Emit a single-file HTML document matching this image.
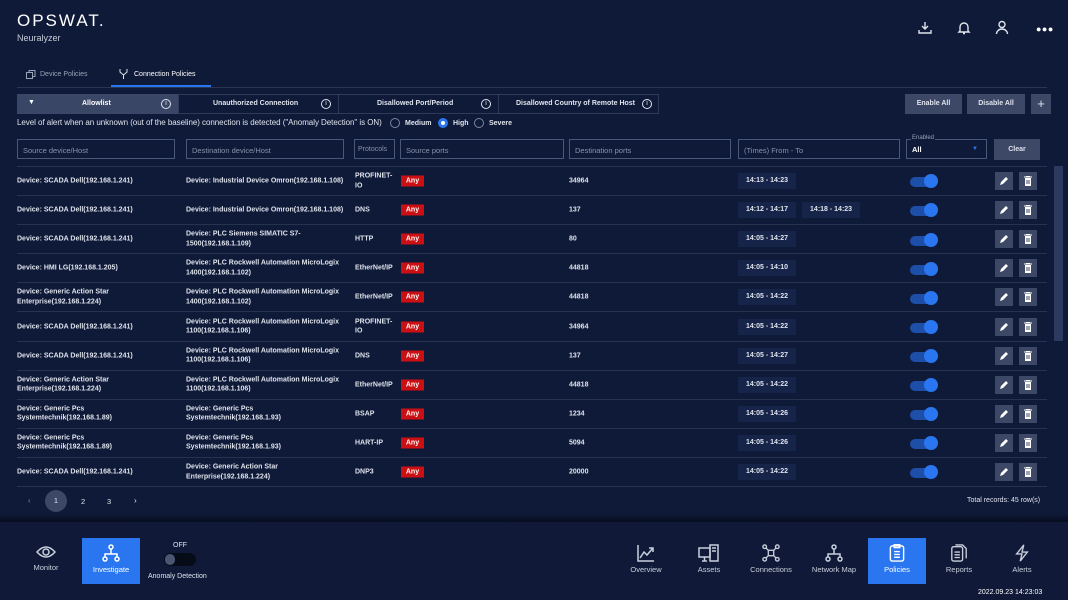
<!DOCTYPE html>
<html><head><meta charset="utf-8"><style>
*{box-sizing:border-box;margin:0;padding:0}
body{width:1068px;height:600px;background:#0f1a38;color:#dfe3ec;font-family:"Liberation Sans",sans-serif;overflow:hidden;position:relative}
.a{position:absolute}
.b{font-weight:bold}
.f8{font-size:8px}
.f7{font-size:7px}
.inp{position:absolute;top:139px;height:20px;border:1px solid #4a5878;color:#8792aa;font-size:7.5px;padding:6px 5px}
.row{position:absolute;left:17px;width:1030px;height:29px;border-bottom:1px solid #27324f;font-size:7px;font-weight:bold;color:#dfe3ec}
.row>div{position:absolute;top:50%;transform:translateY(-50%);line-height:9.5px}
.any{background:#cc0f12;color:#fff;width:23px;height:11px;line-height:11px!important;text-align:center;font-size:7px}
.chip{background:#16244a;padding:0 8px;height:16px;line-height:16px!important;display:inline-block}
.tg{width:26px;height:10px;border-radius:5px;background:#1d4ea8}
.tg:after{content:"";position:absolute;right:-2px;top:-3px;width:14px;height:14px;border-radius:50%;background:#2a76f0}
.btn{width:18px;height:18px;background:#3c4866;display:flex;align-items:center;justify-content:center}
.nav{position:absolute;top:538px;width:58px;height:46px;text-align:center;font-size:7.5px;color:#c9cfdc}
.nav svg{display:block;margin:6px auto 3px}
.ic{position:absolute;width:10px;height:10px;border:1px solid #dfe3ec;border-radius:50%;font-size:7px;text-align:center;line-height:8px}
</style></head><body>
<div class="a" style="left:17px;top:11px;font-size:17px;letter-spacing:2px;color:#fff">OPSWAT.</div>
<div class="a" style="left:17px;top:33px;font-size:9px;color:#c8cdd8">Neuralyzer</div>
<svg class="a" style="left:918px;top:21px" width="14" height="14" viewBox="0 0 14 14" fill="none" stroke="#dfe3ec" stroke-width="1.4"><path d="M7 1v7M4 5l3 3 3-3M1 9v3h12V9"/></svg>
<svg class="a" style="left:957px;top:21px" width="14" height="14" viewBox="0 0 14 14" fill="none" stroke="#dfe3ec" stroke-width="1.4"><path d="M3 10V6a4 4 0 018 0v4l1 1H2zM6 12.5h2"/></svg>
<svg class="a" style="left:995px;top:20px" width="14" height="15" viewBox="0 0 14 15" fill="none" stroke="#dfe3ec" stroke-width="1.4"><circle cx="7" cy="4.5" r="3"/><path d="M1.5 14a5.5 5 0 0111 0"/></svg>
<div class="a" style="left:1036px;top:24px;font-size:9px;letter-spacing:0.5px;color:#fff">●●●</div>

<div class="a" style="left:17px;top:87px;width:1030px;height:1px;background:#2a3552"></div>
<div class="a" style="left:111px;top:85px;width:100px;height:2px;background:#2a76f0"></div>
<svg class="a" style="left:26px;top:70px" width="10" height="9" viewBox="0 0 10 9" fill="none" stroke="#9aa3b8"><rect x="0.5" y="2.5" width="6" height="6"/><path d="M3 2.5V0.5h6v6H6.5"/></svg>
<div class="a f7" style="left:40px;top:71px;color:#9aa3b8">Device Policies</div>
<svg class="a" style="left:119px;top:69px" width="9" height="10" viewBox="0 0 9 10" fill="none" stroke="#dfe3ec"><path d="M1 0v3l3.5 3L8 3V0M4.5 6v4"/></svg>
<div class="a f7" style="left:134px;top:71px;color:#fff">Connection Policies</div>

<div class="a" style="left:17px;top:94px;width:161px;height:20px;background:#3a4665"></div>
<div class="a" style="left:28px;top:99px;font-size:7px;color:#fff">▼</div>
<div class="a f7 b" style="left:82px;top:100px;color:#fff">Allowlist</div>
<div class="a" style="left:178px;top:94px;width:481px;height:20px;border:1px solid #2e3a58"></div>
<div class="a" style="left:338px;top:94px;width:1px;height:20px;background:#2e3a58"></div>
<div class="a" style="left:498px;top:94px;width:1px;height:20px;background:#2e3a58"></div>
<div class="a f7 b" style="left:213px;top:100px">Unauthorized Connection</div>
<div class="a f7 b" style="left:377px;top:100px">Disallowed Port/Period</div>
<div class="a f7 b" style="left:516px;top:100px">Disallowed Country of Remote Host</div>
<div class="ic" style="left:161px;top:99px">i</div>
<div class="ic" style="left:321px;top:99px">i</div>
<div class="ic" style="left:481px;top:99px">i</div>
<div class="ic" style="left:642px;top:99px">i</div>

<div class="a f7 b" style="left:905px;top:94px;width:57px;height:20px;background:#3c4866;text-align:center;line-height:20px">Enable All</div>
<div class="a f7 b" style="left:967px;top:94px;width:58px;height:20px;background:#3c4866;text-align:center;line-height:20px">Disable All</div>
<div class="a" style="left:1031px;top:94px;width:20px;height:20px;background:#3c4866;text-align:center;line-height:19px;font-size:13px">+</div>

<div class="a" style="left:17px;top:118px;font-size:8px;letter-spacing:-0.05px">Level of alert when an unknown (out of the baseline) connection is detected ("Anomaly Detection" is ON)</div>
<div class="a" style="left:390px;top:118px;width:10px;height:10px;border:1px solid #7a849c;border-radius:50%"></div>
<div class="a f7 b" style="left:405px;top:120px">Medium</div>
<div class="a" style="left:438px;top:118px;width:10px;height:10px;border:3px solid #2a76f0;background:#fff;border-radius:50%"></div>
<div class="a f7 b" style="left:453px;top:120px">High</div>
<div class="a" style="left:474px;top:118px;width:10px;height:10px;border:1px solid #7a849c;border-radius:50%"></div>
<div class="a f7 b" style="left:489px;top:120px">Severe</div>

<div class="inp" style="left:17px;width:158px">Source device/Host</div>
<div class="inp" style="left:186px;width:158px">Destination device/Host</div>
<div class="inp" style="left:354px;width:41px;padding-left:3px;font-size:7px">Protocols</div>
<div class="inp" style="left:400px;width:164px">Source ports</div>
<div class="inp" style="left:569px;width:162px">Destination ports</div>
<div class="inp" style="left:738px;width:162px">(Times) From - To</div>
<div class="inp" style="left:906px;width:81px;color:#fff;font-weight:bold;padding-top:5px">All<span style="position:absolute;right:8px;color:#2a76f0;font-size:6px;top:6px">▼</span></div>
<div class="a" style="left:911px;top:135px;font-size:6px;color:#9aa3b8;background:#0f1a38;padding:0 1px">Enabled</div>
<div class="a f7 b" style="left:994px;top:139px;width:46px;height:21px;background:#3c4866;text-align:center;line-height:21px">Clear</div>

<div class="a" style="left:17px;top:166px;width:1030px;height:1px;background:#27324f"></div>
<div class="a" style="left:1054px;top:166px;width:9px;height:175px;background:#2c3a60"></div>

<div id="rows"></div>

<div class="a" style="left:0;top:487px;width:1068px;height:32px;background:#0f1a38"></div>
<div class="a f8" style="left:28px;top:496px;color:#7a849c">‹</div>
<div class="a" style="left:45px;top:490px;width:22px;height:22px;border-radius:50%;background:#3c4866;font-size:7.5px;text-align:center;line-height:22px">1</div>
<div class="a" style="left:81px;top:497px;font-size:7.5px">2</div>
<div class="a" style="left:107px;top:497px;font-size:7.5px">3</div>
<div class="a f8" style="left:134px;top:496px">›</div>
<div class="a f7" style="left:967px;top:497px">Total records: 45 row(s)</div>
<div class="a" style="left:0;top:514px;width:1068px;height:8px;background:linear-gradient(#0f1a38,#070d1e)"></div>
<div class="a" style="left:0;top:522px;width:1068px;height:78px;background:#101a38"></div>

<div class="nav" style="left:17px"><svg width="20" height="16" viewBox="0 0 20 16" fill="none" stroke="#c9cfdc" stroke-width="1.5"><path d="M1 8q9-10 18 0q-9 10-18 0z"/><circle cx="10" cy="8" r="3"/></svg>Monitor</div>
<div class="nav" style="left:82px;background:#2a76f0;color:#fff;top:538px;height:46px"><svg width="18" height="18" viewBox="0 0 18 18" fill="none" stroke="#fff" stroke-width="1.5"><circle cx="9" cy="3" r="2"/><circle cx="3" cy="15" r="2"/><circle cx="15" cy="15" r="2"/><path d="M9 5v5M3 13v-3h12v3"/></svg>Investigate</div>
<div class="a f7" style="left:173px;top:542px">OFF</div>
<div class="a" style="left:164px;top:553px;width:32px;height:13px;border-radius:7px;background:#060b18"></div>
<div class="a" style="left:165px;top:554px;width:10px;height:11px;border-radius:5px;background:#4a5672"></div>
<div class="a f7" style="left:148px;top:573px">Anomaly Detection</div>

<div class="nav" style="left:617px"><svg width="18" height="18" viewBox="0 0 18 18" fill="none" stroke="#c9cfdc" stroke-width="1.5"><path d="M1 1v16h16M3 14l4-6 3 3 6-7M12 4h4v4"/></svg>Overview</div>
<div class="nav" style="left:680px"><svg width="22" height="18" viewBox="0 0 22 18" fill="none" stroke="#c9cfdc" stroke-width="1.5"><rect x="1" y="4" width="11" height="9"/><path d="M4 17h5M6.5 13v4"/><rect x="12" y="1" width="8" height="16"/><path d="M14 4h4M14 7h4"/></svg>Assets</div>
<div class="nav" style="left:742px"><svg width="18" height="18" viewBox="0 0 20 20" fill="none" stroke="#c9cfdc" stroke-width="1.5"><circle cx="3" cy="3" r="2"/><circle cx="17" cy="3" r="2"/><circle cx="3" cy="17" r="2"/><circle cx="17" cy="17" r="2"/><rect x="7" y="7" width="6" height="6"/><path d="M4.5 4.5L7 7M15.5 4.5L13 7M4.5 15.5L7 13M15.5 15.5L13 13"/></svg>Connections</div>
<div class="nav" style="left:805px"><svg width="18" height="18" viewBox="0 0 18 18" fill="none" stroke="#c9cfdc" stroke-width="1.5"><circle cx="9" cy="3" r="2"/><circle cx="3" cy="15" r="2"/><circle cx="15" cy="15" r="2"/><path d="M9 5v5M3 13v-3h12v3"/></svg>Network Map</div>
<div class="nav" style="left:868px;background:#2a76f0;color:#fff"><svg width="16" height="18" viewBox="0 0 16 19" fill="none" stroke="#fff" stroke-width="1.5"><rect x="1" y="2" width="14" height="16" rx="2"/><rect x="5" y="0.8" width="6" height="3"/><path d="M5 8h6M5 11h6M5 14h6"/></svg>Policies</div>
<div class="nav" style="left:930px"><svg width="18" height="18" viewBox="0 0 18 20" fill="none" stroke="#c9cfdc" stroke-width="1.5"><rect x="1" y="3" width="12" height="16" rx="2"/><path d="M5 1h8l4 4v11"/><path d="M4 9h6M4 12h6M4 15h6"/></svg>Reports</div>
<div class="nav" style="left:993px"><svg width="16" height="18" viewBox="0 0 16 20" fill="none" stroke="#c9cfdc" stroke-width="1.5"><path d="M10 1L2 11h6l-2 8 8-10H8z"/></svg>Alerts</div>
<div class="a f7" style="left:978px;top:589px;color:#fff">2022.09.23 14:23:03</div>

<script>
var D=[
["Device: SCADA Dell(192.168.1.241)","Device: Industrial Device Omron(192.168.1.108)","PROFINET-<br>IO","34964",["14:13 - 14:23"]],
["Device: SCADA Dell(192.168.1.241)","Device: Industrial Device Omron(192.168.1.108)","DNS","137",["14:12 - 14:17","14:18 - 14:23"]],
["Device: SCADA Dell(192.168.1.241)","Device: PLC Siemens SIMATIC S7-<br>1500(192.168.1.109)","HTTP","80",["14:05 - 14:27"]],
["Device: HMI LG(192.168.1.205)","Device: PLC Rockwell Automation MicroLogix<br>1400(192.168.1.102)","EtherNet/IP","44818",["14:05 - 14:10"]],
["Device: Generic Action Star<br>Enterprise(192.168.1.224)","Device: PLC Rockwell Automation MicroLogix<br>1400(192.168.1.102)","EtherNet/IP","44818",["14:05 - 14:22"]],
["Device: SCADA Dell(192.168.1.241)","Device: PLC Rockwell Automation MicroLogix<br>1100(192.168.1.106)","PROFINET-<br>IO","34964",["14:05 - 14:22"]],
["Device: SCADA Dell(192.168.1.241)","Device: PLC Rockwell Automation MicroLogix<br>1100(192.168.1.106)","DNS","137",["14:05 - 14:27"]],
["Device: Generic Action Star<br>Enterprise(192.168.1.224)","Device: PLC Rockwell Automation MicroLogix<br>1100(192.168.1.106)","EtherNet/IP","44818",["14:05 - 14:22"]],
["Device: Generic Pcs<br>Systemtechnik(192.168.1.89)","Device: Generic Pcs<br>Systemtechnik(192.168.1.93)","BSAP","1234",["14:05 - 14:26"]],
["Device: Generic Pcs<br>Systemtechnik(192.168.1.89)","Device: Generic Pcs<br>Systemtechnik(192.168.1.93)","HART-IP","5094",["14:05 - 14:26"]],
["Device: SCADA Dell(192.168.1.241)","Device: Generic Action Star<br>Enterprise(192.168.1.224)","DNP3","20000",["14:05 - 14:22"]]];
var h="";
D.forEach(function(r,i){
var t=r[4].map(function(c){return '<span class="chip">'+c+'</span>'}).join('<span style="display:inline-block;width:6px"></span>');
h+='<div class="row" style="top:'+(167+i*29.1)+'px"><div style="left:0">'+r[0]+'</div><div style="left:169px">'+r[1]+'</div><div style="left:338px">'+r[2]+'</div><div class="any" style="left:384px">Any</div><div style="left:552px">'+r[3]+'</div><div style="left:721px">'+t+'</div><div class="tg" style="left:893px;top:55%"></div><div class="btn" style="left:978px"><svg width="10" height="10" viewBox="0 0 10 10"><path d="M1 9l1-3 5-5 2 2-5 5z" fill="#fff"/></svg></div><div class="btn" style="left:1002px"><svg width="8" height="10" viewBox="0 0 8 10"><path d="M0 1h8M2 0.5h4" stroke="#fff"/><rect x="1" y="2" width="6" height="8" fill="#fff"/><path d="M3 4v4M5 4v4" stroke="#3c4866"/></svg></div></div>';
});
document.getElementById("rows").innerHTML=h;
</script>
</body></html>
